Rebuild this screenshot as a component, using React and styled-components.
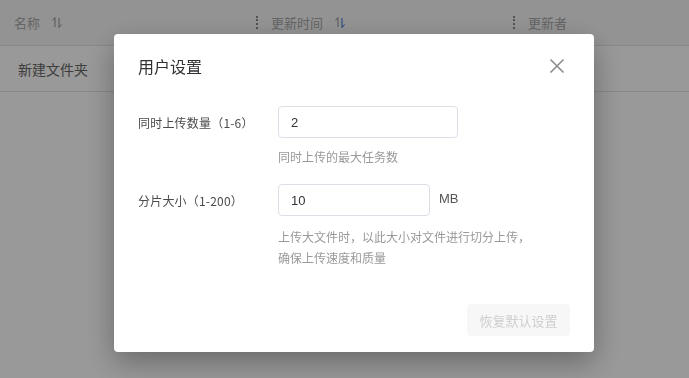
import React from 'react';
import styled, { createGlobalStyle } from 'styled-components';

const GlobalStyle = createGlobalStyle`
  html, body { margin: 0; padding: 0; background: #fff; }
  body { font-family: "Noto Sans CJK SC", "Noto Sans", sans-serif; }
`;

const Page = styled.div`
  width: 689px;
  height: 378px;
  background: #fff;
  overflow: hidden;
`;

const HeaderRow = styled.div`
  display: grid;
  grid-template-columns: 256px 257px 1fr;
  height: 45px;
  background: #f6f6f6;
  border-bottom: 1px solid #e4e4e4;
`;

const HeadCell = styled.div`
  display: flex;
  align-items: center;
  gap: 11px;
  padding-left: ${p => (p.$first ? '14px' : '0')};
  font-size: 13px;
  color: #a8a8a8;
`;

const Divider = styled.span`
  width: 0;
  height: 13px;
  border-left: 2px dotted #8a8a8a;
  margin-right: 2px;
`;

const BodyRow = styled.div`
  display: flex;
  align-items: center;
  height: 45px;
  padding-left: 18px;
  border-bottom: 1px solid #e4e4e4;
  font-size: 14px;
  color: #666;
`;

const Overlay = styled.div`
  position: fixed;
  inset: 0;
  background: rgba(0, 0, 0, 0.4);
  display: flex;
  align-items: flex-start;
  padding: 34px 0 0 114px;
`;

const Dialog = styled.div`
  width: 480px;
  background: #fff;
  border-radius: 4px;
  box-shadow: 0 10px 30px rgba(0, 0, 0, 0.32);
  padding: 20px 24px 16px;
  box-sizing: border-box;
`;

const DialogHead = styled.div`
  display: flex;
  align-items: center;
  justify-content: space-between;
  height: 24px;
`;

const Title = styled.h2`
  margin: 0;
  font-size: 16px;
  font-weight: 400;
  color: #303133;
`;

const CloseButton = styled.button`
  border: none;
  background: none;
  padding: 0;
  margin-right: 5px;
  display: flex;
  cursor: pointer;
`;

const Form = styled.div`
  margin-top: 28px;
  display: flex;
  flex-direction: column;
`;

const Field = styled.div`
  display: grid;
  grid-template-columns: 140px 1fr;
  margin-bottom: ${p => p.$gap || '0'};
`;

const Label = styled.label`
  font-size: 12px;
  color: #4a4a4a;
  height: 32px;
  display: flex;
  align-items: center;
  letter-spacing: 0.2px;
`;

const Control = styled.div`
  display: flex;
  align-items: center;
  gap: 9px;
`;

const Input = styled.input`
  width: ${p => p.$width};
  height: 32px;
  box-sizing: border-box;
  border: 1px solid #dcdfe6;
  border-radius: 4px;
  padding: 0 12px;
  font-family: "Liberation Sans", "Noto Sans", sans-serif;
  font-size: 13px;
  color: #333;
  outline: none;
`;

const Unit = styled.span`
  font-family: "Liberation Sans", sans-serif;
  font-size: 13px;
  color: #555;
  margin-top: -4px;
`;

const Hint = styled.div`
  grid-column: 2;
  margin-top: ${p => p.$top};
  font-size: 12px;
  line-height: ${p => p.$lh};
  color: #999;
`;

const Footer = styled.div`
  display: flex;
  justify-content: flex-end;
  margin-top: 36px;
`;

const ResetButton = styled.button`
  height: 32px;
  width: 103px;
  border: none;
  border-radius: 4px;
  background: #f7f7f7;
  color: #cfcfcf;
  font-family: inherit;
  font-size: 13px;
`;

const SortIcon = ({ active }) => (
  <svg width="12" height="13" viewBox="0 0 12 13" fill="none" strokeWidth="1">
    <path d="M4 1.5V11M4 1.5L1.5 4.5" stroke="#8e8e8e" />
    <path d="M8 2V11.5M8 11.5L10.5 8.5" stroke={active ? '#2d6bd8' : '#8e8e8e'} />
  </svg>
);

const CloseIcon = () => (
  <svg width="16" height="16" viewBox="0 0 16 16" fill="none">
    <path d="M1.5 1.5L14.5 14.5M14.5 1.5L1.5 14.5" stroke="#8c8c8c" strokeWidth="1.6" />
  </svg>
);

export default function App() {
  return (
    <Page>
      <GlobalStyle />
      <HeaderRow>
        <HeadCell $first>名称<SortIcon /></HeadCell>
        <HeadCell><Divider />更新时间<SortIcon active /></HeadCell>
        <HeadCell><Divider />更新者</HeadCell>
      </HeaderRow>
      <BodyRow>新建文件夹</BodyRow>
      <Overlay>
        <Dialog>
          <DialogHead>
            <Title>用户设置</Title>
            <CloseButton aria-label="关闭"><CloseIcon /></CloseButton>
          </DialogHead>
          <Form>
            <Field $gap="17px">
              <Label>同时上传数量（1-6）</Label>
              <Control>
                <Input $width="180px" defaultValue="2" />
              </Control>
              <Hint $top="9px" $lh="20px">同时上传的最大任务数</Hint>
            </Field>
            <Field>
              <Label>分片大小（1-200）</Label>
              <Control>
                <Input $width="152px" defaultValue="10" />
                <Unit>MB</Unit>
              </Control>
              <Hint $top="10px" $lh="21px">
                上传大文件时，以此大小对文件进行切分上传，<br />确保上传速度和质量
              </Hint>
            </Field>
          </Form>
          <Footer>
            <ResetButton disabled>恢复默认设置</ResetButton>
          </Footer>
        </Dialog>
      </Overlay>
    </Page>
  );
}
